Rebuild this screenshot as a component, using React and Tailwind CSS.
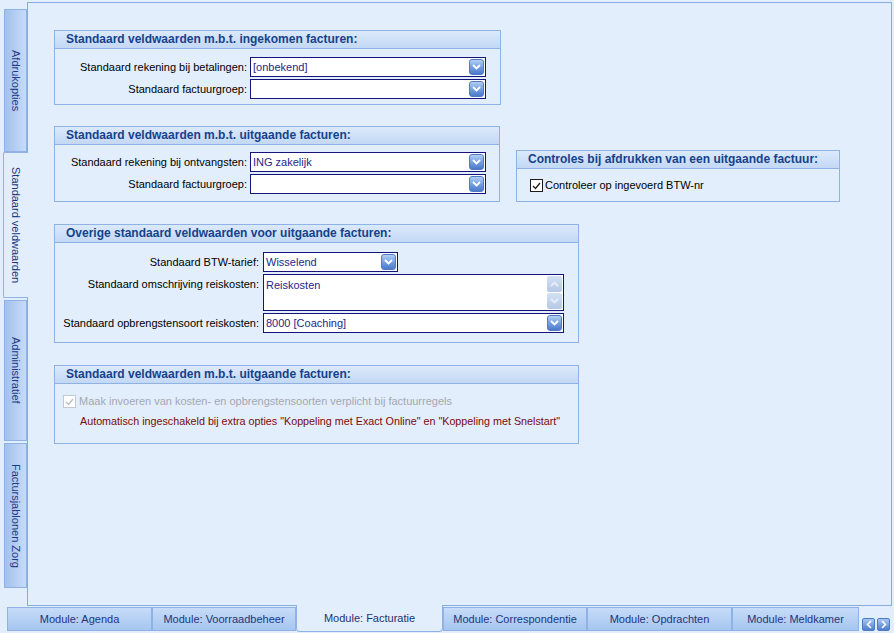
import React from 'react';

// Office-2007 style settings screen: vertical page tabs, group boxes, module tabs at the bottom

function Chevron({ up = false, color = 'white' }) {
  return (
    <svg width="9" height="6" viewBox="0 0 9 6">
      <path d={up ? 'M1 5 L4.5 1.5 L8 5' : 'M1 1 L4.5 4.5 L8 1'} fill="none" stroke={color} strokeWidth="1.8" />
    </svg>
  );
}

function DropButton() {
  return (
    <div className="w-[15px] h-[16px] rounded-[3px] border border-[#4d7bc6] bg-linear-to-b from-[#b4cff4] via-[#76a1e2] to-[#4c79c9] flex items-center justify-center shrink-0">
      <Chevron />
    </div>
  );
}

function Combo({ value, className }) {
  return (
    <div className={`h-[20px] border border-[#14147a] bg-white flex items-center pl-[2px] pr-[1px] ${className}`}>
      <span className="flex-1 text-[#26268a] whitespace-nowrap">{value}</span>
      <DropButton />
    </div>
  );
}

function Group({ title, className, bodyClass, children }) {
  return (
    <div className={`border border-[#8db2e3] ${className}`}>
      <div className="h-[18px] border-b border-[#8db2e3] bg-linear-to-b from-[#dce9fb] to-[#c3d8f5] pl-[11px] font-bold text-[12px] text-[#15428b] leading-[17px] whitespace-nowrap">
        {title}
      </div>
      <div className={bodyClass}>{children}</div>
    </div>
  );
}

function Row({ label, labelWidth, children, top = false }) {
  return (
    <div className={`flex ${top ? 'items-start' : 'items-center'}`}>
      <div className={`${labelWidth} text-right whitespace-nowrap ${top ? 'pt-[2px]' : ''}`}>{label}</div>
      {children}
    </div>
  );
}

function CheckBox({ disabled = false }) {
  return (
    <div className={`w-[13px] h-[13px] border bg-white flex items-center justify-center shrink-0 ${disabled ? 'border-[#c2c9d4]' : 'border-[#1c1c1c]'}`}>
      <svg width="9" height="8" viewBox="0 0 9 8">
        <path d="M1 4 L3.5 6.5 L8 1" fill="none" stroke={disabled ? '#b9c0cc' : '#222'} strokeWidth="1.4" />
      </svg>
    </div>
  );
}

function SideTab({ label, active = false, height }) {
  return (
    <div
      className={`${height} flex items-center justify-center text-[11px] ${
        active
          ? 'w-[25px] -ml-px relative z-10 bg-[#e2eefc] border border-r-0 border-[#8db2e3] rounded-l-[2px] text-[#1b3680]'
          : 'w-[23px] border border-[#8db2e3] bg-linear-to-r from-[#a2c1ed] to-[#c7dbf7] text-[#1f3a88]'
      }`}
    >
      <span className="[writing-mode:vertical-rl] whitespace-nowrap">{label}</span>
    </div>
  );
}

function ModuleTab({ label, width, active = false }) {
  return (
    <div
      className={`${width} flex items-center justify-center text-[11px] whitespace-nowrap ${
        active
          ? 'h-[27px] -mt-[2px] relative z-10 bg-[#e2eefc] border border-t-0 border-[#8db2e3] rounded-b-[4px] text-[#1e3170]'
          : 'h-[24px] border border-[#8db2e3] bg-linear-to-b from-[#c6dcf8] to-[#a6c5ef] text-[#22357e]'
      }`}
    >
      {label}
    </div>
  );
}

function ArrowButton({ dir }) {
  return (
    <div className="w-[13px] h-[13px] rounded-[2px] border border-[#4d7bc6] bg-linear-to-b from-[#a9c7f3] to-[#4f7dcb] flex items-center justify-center">
      <svg width="6" height="9" viewBox="0 0 6 9">
        <path d={dir === 'left' ? 'M5 1 L1.5 4.5 L5 8' : 'M1 1 L4.5 4.5 L1 8'} fill="none" stroke="white" strokeWidth="1.6" />
      </svg>
    </div>
  );
}

export default function App() {
  return (
    <div className="w-[894px] h-[633px] bg-[#e2eefc] flex flex-col font-['Liberation_Sans',Arial,sans-serif] text-[11px] text-black overflow-hidden">
      <div className="h-[606px] flex">
        {/* Page tabs */}
        <div className="w-[27px] pl-[4px] pt-[9px] flex flex-col shrink-0">
          <SideTab label="Afdrukopties" height="h-[143px]" />
          <SideTab label="Standaard veldwaarden" height="h-[146px]" active />
          <div className="h-[2px]" />
          <SideTab label="Administratief" height="h-[141px]" />
          <div className="h-[2px]" />
          <SideTab label="Factursjablonen Zorg" height="h-[145px]" />
        </div>

        {/* Page content */}
        <div className="flex-1 mt-[2px] mr-[2px] h-[604px] border border-[#86abe0] bg-[#e2eefc] pl-[26px] pt-[27px] flex flex-col">
          <Group
            title="Standaard veldwaarden m.b.t. ingekomen facturen:"
            className="w-[447px]"
            bodyClass="pt-[8px] pb-[5px] flex flex-col gap-[2px]"
          >
            <Row label="Standaard rekening bij betalingen:" labelWidth="w-[192px] mr-[3px]">
              <Combo value="[onbekend]" className="w-[236px]" />
            </Row>
            <Row label="Standaard factuurgroep:" labelWidth="w-[192px] mr-[3px]">
              <Combo value="" className="w-[236px]" />
            </Row>
          </Group>

          <div className="flex items-end gap-[16px] mt-[21px]">
            <Group
              title="Standaard veldwaarden m.b.t. uitgaande facturen:"
              className="w-[446px]"
              bodyClass="pt-[7px] pb-[7px] flex flex-col gap-[2px]"
            >
              <Row label="Standaard rekening bij ontvangsten:" labelWidth="w-[192px] mr-[3px]">
                <Combo value="ING zakelijk" className="w-[236px]" />
              </Row>
              <Row label="Standaard factuurgroep:" labelWidth="w-[192px] mr-[3px]">
                <Combo value="" className="w-[236px]" />
              </Row>
            </Group>

            <Group
              title="Controles bij afdrukken van een uitgaande factuur:"
              className="w-[324px]"
              bodyClass="pt-[10px] pb-[9px] pl-[13px] flex items-center gap-[2px]"
            >
              <CheckBox />
              <span className="leading-[13px]">Controleer op ingevoerd BTW-nr</span>
            </Group>
          </div>

          <Group
            title="Overige standaard veldwaarden voor uitgaande facturen:"
            className="w-[525px] mt-[22px]"
            bodyClass="pt-[9px] pb-[9px] flex flex-col gap-[2px]"
          >
            <Row label="Standaard BTW-tarief:" labelWidth="w-[204px] mr-[4px]">
              <Combo value="Wisselend" className="w-[135px]" />
            </Row>
            <Row label="Standaard omschrijving reiskosten:" labelWidth="w-[204px] mr-[4px]" top>
              <div className="w-[301px] h-[37px] border border-[#14147a] bg-white flex">
                <span className="flex-1 pl-[2px] pt-[2px] text-[#26268a]">Reiskosten</span>
                <div className="w-[16px] pt-[1px] pr-[1px] flex flex-col gap-[1px]">
                  <div className="h-[16px] rounded-[2px] bg-linear-to-b from-[#d3e1f3] to-[#b4c8e6] flex items-center justify-center">
                    <Chevron up color="#e8eef8" />
                  </div>
                  <div className="h-[16px] rounded-[2px] bg-linear-to-b from-[#d3e1f3] to-[#b4c8e6] flex items-center justify-center">
                    <Chevron color="#e8eef8" />
                  </div>
                </div>
              </div>
            </Row>
            <Row label="Standaard opbrengstensoort reiskosten:" labelWidth="w-[204px] mr-[4px]">
              <Combo value="8000 [Coaching]" className="w-[301px]" />
            </Row>
          </Group>

          <Group
            title="Standaard veldwaarden m.b.t. uitgaande facturen:"
            className="w-[525px] mt-[22px]"
            bodyClass="pt-[11px] pb-[14px] pl-[8px] flex flex-col gap-[5px]"
          >
            <div className="flex items-center gap-[3px]">
              <CheckBox disabled />
              <span className="text-[#a3a8b2] leading-[13px]">
                Maak invoeren van kosten- en opbrengstensoorten verplicht bij factuurregels
              </span>
            </div>
            <div className="pl-[17px] text-[10.75px] text-[#7a0a0a] whitespace-nowrap">
              Automatisch ingeschakeld bij extra opties "Koppeling met Exact Online" en "Koppeling met Snelstart"
            </div>
          </Group>
        </div>
      </div>

      {/* Module tabs */}
      <div className="flex items-start pl-[7px] pt-px">
        <ModuleTab label="Module: Agenda" width="w-[145px]" />
        <ModuleTab label="Module: Voorraadbeheer" width="w-[144px]" />
        <ModuleTab label="Module: Facturatie" width="w-[147px]" active />
        <ModuleTab label="Module: Correspondentie" width="w-[144px]" />
        <ModuleTab label="Module: Opdrachten" width="w-[145px]" />
        <ModuleTab label="Module: Meldkamer" width="w-[127px]" />
        <div className="flex gap-[2px] ml-[3px] mt-[11px]">
          <ArrowButton dir="left" />
          <ArrowButton dir="right" />
        </div>
      </div>
    </div>
  );
}
